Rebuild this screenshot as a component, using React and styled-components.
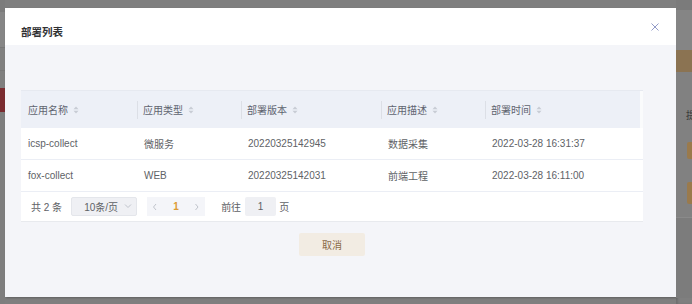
import React from 'react';
import styled, { createGlobalStyle } from 'styled-components';

const GlobalStyle = createGlobalStyle`
    body {
        margin: 0;
        font-family: "Liberation Sans", "Noto Sans CJK SC", sans-serif;
    }
`;

const columns = [
    { key: 'name', title: '应用名称', width: 116 },
    { key: 'type', title: '应用类型', width: 104 },
    { key: 'version', title: '部署版本', width: 140 },
    { key: 'desc', title: '应用描述', width: 104 },
    { key: 'time', title: '部署时间', width: 155 },
];

const rows = [
    { id: 1, name: 'icsp-collect', type: '微服务', version: '20220325142945', desc: '数据采集', time: '2022-03-28 16:31:37' },
    { id: 2, name: 'fox-collect', type: 'WEB', version: '20220325142031', desc: '前端工程', time: '2022-03-28 16:11:00' },
];

const template = columns.map((c) => `${c.width}px`).join(' ') + ' 3px';

function SortIcon() {
    return (
        <svg width="6" height="8" viewBox="0 0 6 8">
            <path d="M3 0.5 L5.5 3.2 H0.5 Z" fill="#c8ccd4" />
            <path d="M3 7.5 L5.5 4.8 H0.5 Z" fill="#c8ccd4" />
        </svg>
    );
}

function Chevron({ dir }) {
    const d = dir === 'left' ? 'M4 1 L1.5 4 L4 7' : dir === 'right' ? 'M1.5 1 L4 4 L1.5 7' : 'M1 1.5 L4 4.5 L7 1.5';
    const w = dir === 'down' ? 8 : 6;
    return (
        <svg width={w} height="8" viewBox={`0 0 ${w} 8`}>
            <path d={d} fill="none" stroke="#c0c4cc" strokeWidth="1" />
        </svg>
    );
}

export default function App() {
    return (
        <>
            <GlobalStyle />
            <Backdrop>
                <SideColumn>
                    <Strip $h={12} $bg="#7c7c7c" />
                    <Strip $h={35} $bg="#868686" />
                    <Strip $h={1} $bg="#777777" />
                    <Strip $h={22} $bg="#808080" />
                    <Strip $h={1} $bg="#787878" />
                    <Strip $h={17} $bg="#7f7f7f" />
                    <Strip $h={24} $bg="#7b2c31" />
                    <Strip $h={192} $bg="#7e7e7e" />
                </SideColumn>

                <ModalColumn>
                    <Modal>
                        <ModalHeader>
                            <ModalTitle>部署列表</ModalTitle>
                            <svg width="8" height="8" viewBox="0 0 8 8">
                                <path d="M0.5 0.5 L7.5 7.5 M7.5 0.5 L0.5 7.5" stroke="#939bc8" strokeWidth="1" />
                            </svg>
                        </ModalHeader>
                        <ModalBody>
                            <TableCard>
                                <HeadRow>
                                    {columns.map((c, i) => (
                                        <HeadCell key={c.key} $divider={i > 0}>
                                            {c.title}
                                            <SortIcon />
                                        </HeadCell>
                                    ))}
                                    <Gutter />
                                </HeadRow>
                                {rows.map((r) => (
                                    <BodyRow key={r.id}>
                                        {columns.map((c) => (
                                            <BodyCell key={c.key}>{r[c.key]}</BodyCell>
                                        ))}
                                    </BodyRow>
                                ))}
                                <Pagination>
                                    <PagerText>共 2 条</PagerText>
                                    <SizeSelect>
                                        <span>10条/页</span>
                                        <Chevron dir="down" />
                                    </SizeSelect>
                                    <Pager>
                                        <Chevron dir="left" />
                                        <ActivePage>1</ActivePage>
                                        <Chevron dir="right" />
                                    </Pager>
                                    <PagerText $ml={16}>前往</PagerText>
                                    <JumpInput>1</JumpInput>
                                    <PagerText $ml={3}>页</PagerText>
                                </Pagination>
                            </TableCard>
                            <Footer>
                                <CancelButton>取消</CancelButton>
                            </Footer>
                        </ModalBody>
                    </Modal>
                </ModalColumn>

                <SideColumn $shade>
                    <Strip $h={10} $bg="#7b7b7b" />
                    <Strip $h={40} $bg="#858585" />
                    <Strip $h={22} $bg="#8b7352" />
                    <Strip $h={33} $bg="#818181" />
                    <SideLabel>提</SideLabel>
                    <Strip $h={17} $bg="#818181" />
                    <SideButtonRow $h={17} />
                    <Strip $h={23} $bg="#818181" />
                    <SideButtonRow $h={22} />
                    <Strip $h={13} $bg="#818181" />
                    <Strip $h={1} $bg="#8a8a8a" />
                    <Strip $h={80} $bg="#7c7c7c" />
                </SideColumn>
            </Backdrop>
        </>
    );
}

const Backdrop = styled.div`
    display: grid;
    grid-template-columns: 5px 671px 1fr;
    height: 304px;
    background: #7f7f7f;
    overflow: hidden;
`;

const SideColumn = styled.div`
    display: flex;
    flex-direction: column;
    overflow: hidden;
    box-shadow: ${(p) => (p.$shade ? 'inset 2px 0 2px rgba(0,0,0,0.12)' : 'none')};
`;

const Strip = styled.div`
    height: ${(p) => p.$h}px;
    flex-shrink: 0;
    background: ${(p) => p.$bg};
`;

const SideLabel = styled.div`
    height: 20px;
    flex-shrink: 0;
    background: #818181;
    padding-left: 10px;
    font-size: 10px;
    line-height: 20px;
    color: #3a3a3a;
    white-space: nowrap;
    font-family: "Noto Sans CJK SC", sans-serif;
`;

const SideButtonRow = styled.div`
    height: ${(p) => p.$h}px;
    flex-shrink: 0;
    background: #818181;
    padding-left: 11px;
    display: flex;

    &::after {
        content: '';
        flex: 1;
        background: #9a7a4c;
        border-radius: 2px 0 0 2px;
    }
`;

const ModalColumn = styled.div`
    padding-top: 8px;
`;

const Modal = styled.div`
    height: 289px;
    display: flex;
    flex-direction: column;
    box-shadow: 1px 1px 2px rgba(0, 0, 0, 0.25);
`;

const ModalHeader = styled.div`
    height: 37px;
    flex-shrink: 0;
    background: #ffffff;
    display: flex;
    align-items: center;
    justify-content: space-between;
    padding: 0 17px 0 16px;
`;

const ModalTitle = styled.div`
    font-family: "Noto Sans CJK SC", sans-serif;
    font-size: 10.5px;
    font-weight: bold;
    color: #303133;
    margin-top: 10px;
`;

const ModalBody = styled.div`
    flex: 1;
    background: #f4f5f9;
    padding: 45px 33px 0 16px;
`;

const TableCard = styled.div`
    background: #ffffff;
    border-top: 1px solid #e6e9f0;
    border-bottom: 1px solid #e8eaee;
    font-size: 10px;
    color: #606266;
`;

const HeadRow = styled.div`
    display: grid;
    grid-template-columns: ${template};
    height: 37px;
    background: #edf0f7;
    align-items: center;
`;

const HeadCell = styled.div`
    display: flex;
    align-items: center;
    gap: 5px;
    height: 18px;
    padding-left: ${(p) => (p.$divider ? 5 : 7)}px;
    border-left: ${(p) => (p.$divider ? '1px solid #dcdfe6' : 'none')};
    color: #5f6470;
`;

const Gutter = styled.div`
    height: 100%;
    background: #fafbfc;
`;

const BodyRow = styled.div`
    display: grid;
    grid-template-columns: ${template};
    height: 31px;
    align-items: center;
    border-bottom: 1px solid #ebeef5;
`;

const BodyCell = styled.div`
    padding-left: 7px;
`;

const Pagination = styled.div`
    display: flex;
    align-items: center;
    height: 29px;
    padding-left: 10px;
`;

const PagerText = styled.span`
    margin-left: ${(p) => p.$ml || 0}px;
`;

const SizeSelect = styled.div`
    margin-left: 9px;
    width: 66px;
    height: 19px;
    box-sizing: border-box;
    display: flex;
    align-items: center;
    justify-content: space-between;
    padding: 0 4px 0 12px;
    background: #eff0f4;
    border: 1px solid #e4e6eb;
    border-radius: 2px;
`;

const Pager = styled.div`
    margin-left: 10px;
    width: 58px;
    height: 19px;
    display: flex;
    align-items: center;
    justify-content: space-between;
    padding: 0 5px;
    box-sizing: border-box;
    background: #f4f5f9;
`;

const ActivePage = styled.span`
    color: #dd9b34;
    font-weight: bold;
`;

const JumpInput = styled.div`
    margin-left: 4px;
    width: 31px;
    height: 19px;
    display: flex;
    align-items: center;
    justify-content: center;
    background: #eff0f4;
    border-radius: 2px;
`;

const Footer = styled.div`
    display: flex;
    justify-content: center;
    padding-top: 11px;
`;

const CancelButton = styled.button`
    width: 66px;
    height: 23px;
    border: none;
    border-radius: 2px;
    background: #f2ece3;
    color: #8a6a48;
    font-family: "Noto Sans CJK SC", sans-serif;
    font-size: 10px;
    padding: 0;
`;
